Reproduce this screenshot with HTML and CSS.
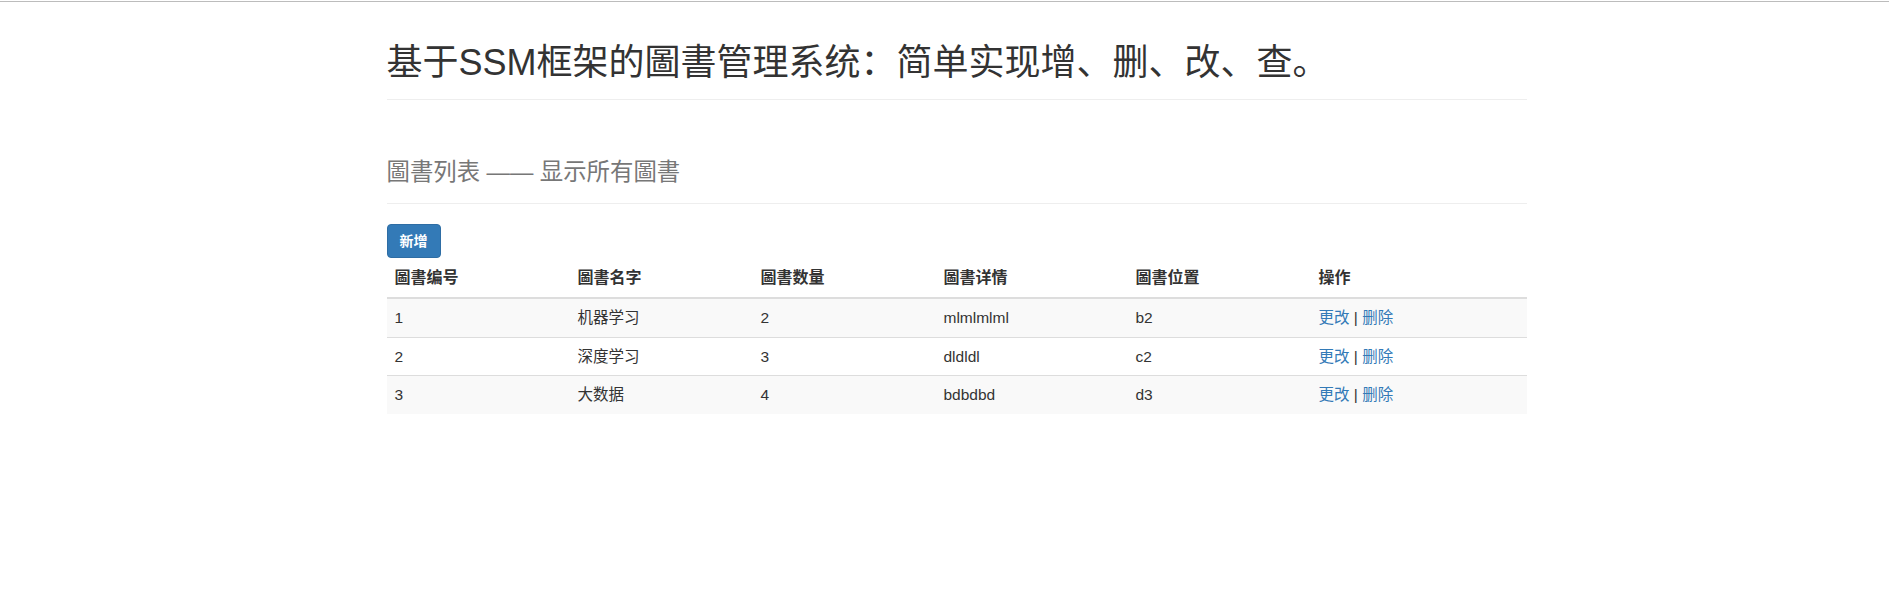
FILE: index.html
```html
<!DOCTYPE html>
<html lang="zh-CN">
<head>
<meta charset="utf-8">
<title>圖書管理系统</title>
<link rel="stylesheet" href="styles.css">
</head>
<body>
<div class="topline"></div>
<div class="container">
  <header class="page-header main-header">
    <h1 class="title">基于SSM框架的圖書管理系统：简单实现增、删、改、查。</h1>
  </header>
  <header class="page-header list-header">
    <h1 class="subtitle">圖書列表 —— 显示所有圖書</h1>
  </header>
  <div class="toolbar">
    <a class="btn btn-primary" href="#">新增</a>
  </div>
  <table class="table">
    <thead>
      <tr>
        <th class="col-id">圖書编号</th>
        <th class="col-name">圖書名字</th>
        <th class="col-count">圖書数量</th>
        <th class="col-detail">圖書详情</th>
        <th class="col-place">圖書位置</th>
        <th class="col-ops">操作</th>
      </tr>
    </thead>
    <tbody>
      <tr>
        <td>1</td><td>机器学习</td><td>2</td><td>mlmlmlml</td><td>b2</td>
        <td><a href="#">更改</a> | <a href="#">删除</a></td>
      </tr>
      <tr>
        <td>2</td><td>深度学习</td><td>3</td><td>dldldl</td><td>c2</td>
        <td><a href="#">更改</a> | <a href="#">删除</a></td>
      </tr>
      <tr>
        <td>3</td><td>大数据</td><td>4</td><td>bdbdbd</td><td>d3</td>
        <td><a href="#">更改</a> | <a href="#">删除</a></td>
      </tr>
    </tbody>
  </table>
</div>
</body>
</html>
```

FILE: styles.css
```css
html, body {
  margin: 0;
  padding: 0;
  background: #fff;
}

body {
  font-family: "Liberation Sans", "Noto Sans CJK SC", sans-serif;
  font-size: 14px;
  line-height: 20px;
  color: #333;
}

.topline {
  margin-top: 1px;
  height: 1px;
  background: #bcbcbc;
}

.container {
  width: 1140px;
  margin-left: calc(50% - 558px);
}

.page-header {
  padding-bottom: 9px;
  border-bottom: 1px solid #eee;
  margin: 0 0 20px;
}

.title {
  font-size: 36px;
  font-weight: 400;
  line-height: 39.6px;
  margin: 41px 0 7px;
  color: #333;
}

.list-header {
  margin-top: 60px;
}

.subtitle {
  font-size: 23.4px;
  font-weight: 400;
  line-height: 25.7px;
  margin: 0 0 9px;
  color: #777;
}

.toolbar {
  display: flex;
}

.btn {
  display: inline-block;
  padding: 6px 12px;
  font-size: 14px;
  line-height: 20px;
  border: 1px solid transparent;
  border-radius: 4px;
  text-decoration: none;
  font-weight: 700;
}

.btn-primary {
  color: #fff;
  background: #337ab7;
  border-color: #2e6da4;
}

.table {
  width: 100%;
  border-collapse: collapse;
  border-spacing: 0;
  table-layout: fixed;
}

.table th,
.table td {
  padding: 8px;
  text-align: left;
  vertical-align: top;
}

.table th {
  font-size: 16px;
  font-weight: 700;
  line-height: 23px;
  border-bottom: 2px solid #ddd;
  vertical-align: bottom;
}

.table td {
  font-size: 15.5px;
  line-height: 21.5px;
  border-top: 1px solid #ddd;
}

.table tbody tr:nth-child(odd) {
  background: #f9f9f9;
}

.col-id, .col-name, .col-count, .col-place { width: 167px; }
.col-detail { width: 176px; }

.table a {
  color: #337ab7;
  text-decoration: none;
}
```
